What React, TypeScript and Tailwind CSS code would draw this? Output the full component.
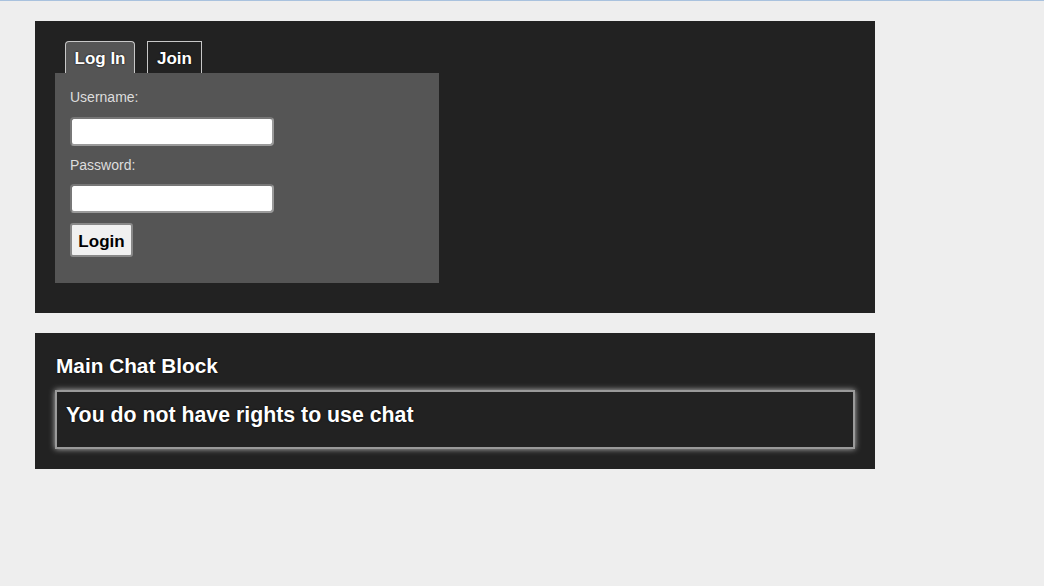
import React from "react";

export default function App() {
  const font = { fontFamily: '"Liberation Sans", Arial, sans-serif' };
  return (
    <div
      className="min-h-[586px] w-full bg-[#eeeeee] border-t border-[#a9c2de]"
      style={font}
    >
      <div className="ml-[35px] pt-[20px] w-[840px]">
        <div className="bg-[#222222] pt-[20px] pb-[30px] px-[20px]">
          <div className="flex items-end gap-[12px] pl-[10px] h-[32px]">
            <div className="h-[32px] w-[70px] pt-[2px] rounded-t-[4px] border border-b-0 border-[#c8c8c8] bg-[#555555] flex items-center justify-center text-white font-bold text-[17px] [text-shadow:0_0_2px_#000]">
              Log In
            </div>
            <div className="h-[32px] w-[55px] pt-[2px] border border-b-0 border-[#c8c8c8] bg-[#222222] flex items-center justify-center text-white font-bold text-[17px] [text-shadow:0_0_2px_#000]">
              Join
            </div>
          </div>
          <div className="w-[384px] bg-[#555555] pt-[16px] pb-[26px] px-[15px] flex flex-col items-start">
            <div className="text-[14px] leading-[17px] text-[#dddddd]">Username:</div>
            <input
              type="text"
              className="mt-[11px] h-[29px] w-[204px] rounded-[4px] border-2 border-t-[#777777] border-l-[#777777] border-r-[#9a9a9a] border-b-[#9a9a9a] bg-white outline-none"
            />
            <div className="mt-[11px] text-[14px] leading-[17px] text-[#dddddd]">Password:</div>
            <input
              type="password"
              className="mt-[10px] h-[29px] w-[204px] rounded-[4px] border-2 border-t-[#777777] border-l-[#777777] border-r-[#9a9a9a] border-b-[#9a9a9a] bg-white outline-none"
            />
            <button className="mt-[10px] h-[34px] w-[63px] pt-[3px] rounded-[3px] border-2 border-[#888888] bg-[#f0f0f0] text-black font-bold text-[17px] flex items-center justify-center">
              Login
            </button>
          </div>
        </div>
        <div className="mt-[20px] bg-[#222222] pt-[20px] pb-[20px] px-[20px]">
          <div className="pl-[1px] text-white font-bold text-[20.8px] leading-[26px] [text-shadow:0_0_2px_#000]">
            Main Chat Block
          </div>
          <div className="mt-[11px] h-[59px] border-2 border-[#9a9a9a] shadow-[0_0_6px_#bbbbbb] pl-[9px] pt-[11px]">
            <div className="text-white font-bold text-[21.3px] leading-[25px] [text-shadow:0_0_2px_#000]">
              You do not have rights to use chat
            </div>
          </div>
        </div>
      </div>
    </div>
  );
}
